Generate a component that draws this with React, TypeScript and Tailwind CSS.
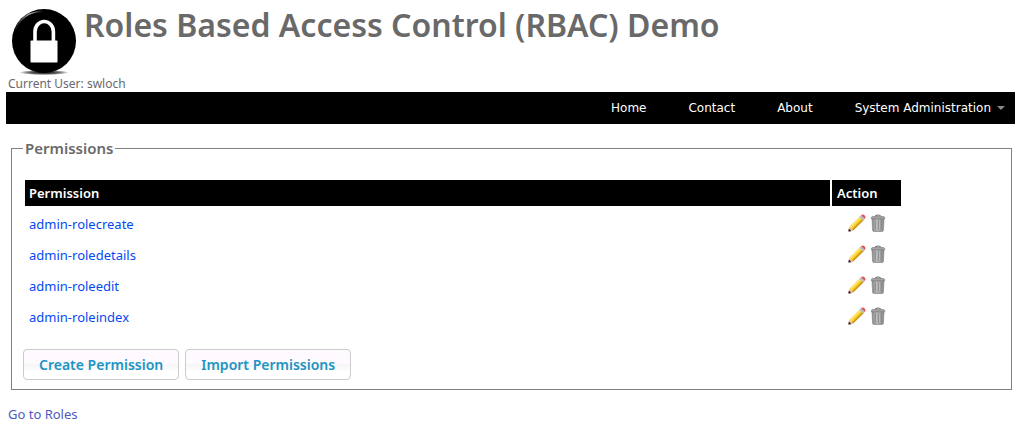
import React from "react";

const navLinks = ["Home", "Contact", "About"];
const permissions = [
  "admin-rolecreate",
  "admin-roledetails",
  "admin-roleedit",
  "admin-roleindex",
];

function LockLogo() {
  return (
    <svg className="h-[68px] w-[68px] shrink-0" viewBox="0 0 68 68" aria-hidden="true">
      <defs>
        <radialGradient id="shade">
          <stop offset="0" stopColor="#000" stopOpacity="1" />
          <stop offset="0.6" stopColor="#000" stopOpacity="0.6" />
          <stop offset="1" stopColor="#000" stopOpacity="0" />
        </radialGradient>
        <linearGradient id="shine" x1="0" y1="0" x2="1" y2="0">
          <stop offset="0" stopColor="#fff" stopOpacity="0" />
          <stop offset="0.5" stopColor="#fff" stopOpacity="0.7" />
          <stop offset="1" stopColor="#fff" stopOpacity="0" />
        </linearGradient>
      </defs>
      <ellipse cx="34" cy="63.500" rx="25" ry="2.600" fill="url(#shade)" />
      <circle cx="34" cy="32" r="32" fill="#000" />
      <path d="M4.500 23C9 9 20 2.500 33 2.200" fill="none" stroke="url(#shine)" strokeWidth="1.400" />
      <path d="M25 34V22.500a9.200 10 0 0 1 18.400 0V34" fill="none" stroke="#fff" strokeWidth="3.600" />
      <rect x="20.500" y="31.500" width="27" height="22" rx="1" fill="#fff" />
    </svg>
  );
}

function PencilIcon() {
  return (
    <svg className="block h-[18px] w-[18px]" viewBox="0 0 18 18" aria-hidden="true">
      <defs>
        <linearGradient id="wood" gradientUnits="userSpaceOnUse" x1="6" y1="6" x2="11" y2="11">
          <stop offset="0" stopColor="#d9a515" />
          <stop offset="0.35" stopColor="#ffec70" />
          <stop offset="0.65" stopColor="#f7c71c" />
          <stop offset="1" stopColor="#b9790a" />
        </linearGradient>
      </defs>
      <path d="M1.600 12.400 5.400 16.400.6 17.500Z" fill="#f4b09c" />
      <path d="M.8 14.600 3.300 17.200.4 17.600Z" fill="#1c1616" />
      <path d="M1.400 12.700 11.700 2.400 15.600 6.200 5.200 16.500Z" fill="url(#wood)" />
      <path d="M11.300 2.800 13 1.200 16.800 5 15.200 6.600Z" fill="#b8bdca" />
      <path d="M13 1.200C14 .3 15.400.3 16.500 1.300 17.700 2.500 17.700 4 16.800 5Z" fill="#dc5555" />
    </svg>
  );
}

function TrashIcon() {
  return (
    <svg className="block h-[18px] w-4" viewBox="0 0 16 18" aria-hidden="true">
      <defs>
        <linearGradient id="can" x1="0" x2="1" y1="0" y2="0">
          <stop offset="0" stopColor="#8a8a8a" />
          <stop offset="0.4" stopColor="#b4b4b4" />
          <stop offset="1" stopColor="#8a8a8a" />
        </linearGradient>
      </defs>
      <path d="M5.500 2.500C5.500.5 10.500.5 10.500 2.500" fill="none" stroke="#707070" strokeWidth="1.200" />
      <path d="M2 4.500H14L13.400 16.300Q13.300 17.500 12 17.500H4Q2.700 17.500 2.600 16.300Z" fill="url(#can)" stroke="#7c7c7c" strokeWidth=".6" />
      <path d="M5.500 6.500V15.500M8.500 6.500V15.500M11.500 6.500V15.500" stroke="#858585" strokeWidth=".7" />
      <path d="M6.500 6.500V15.500M9.500 6.500V15.500" stroke="#c4c4c4" strokeWidth=".7" />
      <path d="M1.300 4.800V3.700Q1.500 2.600 3 2.600H13Q14.500 2.600 14.700 3.700V4.800Z" fill="#a8a8a8" stroke="#7a7a7a" strokeWidth=".7" />
    </svg>
  );
}

export default function App() {
  return (
    <div className="bg-white pr-[13px] pl-[6px] font-['Trebuchet_MS','Noto_Sans',sans-serif] text-[13px] leading-4 text-[#696969]">
      <header>
        <div className="flex items-start gap-[6px] pt-[9px] pl-1">
          <LockLogo />
          <h1 className="text-[32px] leading-8 font-semibold">Roles Based Access Control (RBAC) Demo</h1>
        </div>
        <p className="-mt-px pl-[2px] text-[12px]">Current User: swloch</p>
        <nav className="flex h-8 items-center justify-end gap-[42px] bg-black pr-[10px] font-['DejaVu_Sans',sans-serif] text-[12px] text-white">
          {navLinks.map((label) => (
            <a key={label} href="#">{label}</a>
          ))}
          <a href="#" className="flex items-center gap-[6px]">
            System Administration
            <svg className="h-1 w-2" viewBox="0 0 8 4" aria-hidden="true">
              <path d="M0 0H8L4 4Z" fill="#888" />
            </svg>
          </a>
        </nav>
      </header>

      <main>
        <fieldset className="mt-[14px] mr-[3px] ml-[5px] border border-[#808080] px-[11px] pb-[9px]">
          <legend className="px-[2px] text-[15px] leading-5 font-semibold">Permissions</legend>
          <table className="mt-[22px] ml-[2px] w-full max-w-[876px] border-collapse text-left">
            <thead className="text-white">
              <tr className="h-[26px]">
                <th className="border-r-2 border-white bg-black px-1 font-semibold">Permission</th>
                <th className="w-[70px] bg-black px-[5px] font-semibold">Action</th>
              </tr>
            </thead>
            <tbody>
              {permissions.map((name) => (
                <tr key={name} className="h-[31px]">
                  <td className="px-1 pt-1">
                    <a href="#" className="text-[#034af3]">{name}</a>
                  </td>
                  <td className="pt-[2px] pl-[2px]">
                    <div className="flex justify-center gap-1">
                      <button type="button" aria-label={`Edit ${name}`}><PencilIcon /></button>
                      <button type="button" aria-label={`Delete ${name}`}><TrashIcon /></button>
                    </div>
                  </td>
                </tr>
              ))}
            </tbody>
          </table>
          <div className="mt-[19px] flex gap-[6px] text-[14px] leading-5 font-semibold text-[#1c94c4]">
            <button type="button" className="h-[31px] rounded border border-[#ccc] bg-linear-to-b from-[#fffaff] from-50% via-[#f5f5f5] via-50% to-white to-75% px-[15px]">
              Create Permission
            </button>
            <button type="button" className="h-[31px] rounded border border-[#ccc] bg-linear-to-b from-[#fffaff] from-50% via-[#f5f5f5] via-50% to-white to-75% px-[15px]">
              Import Permissions
            </button>
          </div>
        </fieldset>
        <a href="#" className="mt-4 ml-[2px] inline-block text-[#505abc]">Go to Roles</a>
      </main>
    </div>
  );
}
